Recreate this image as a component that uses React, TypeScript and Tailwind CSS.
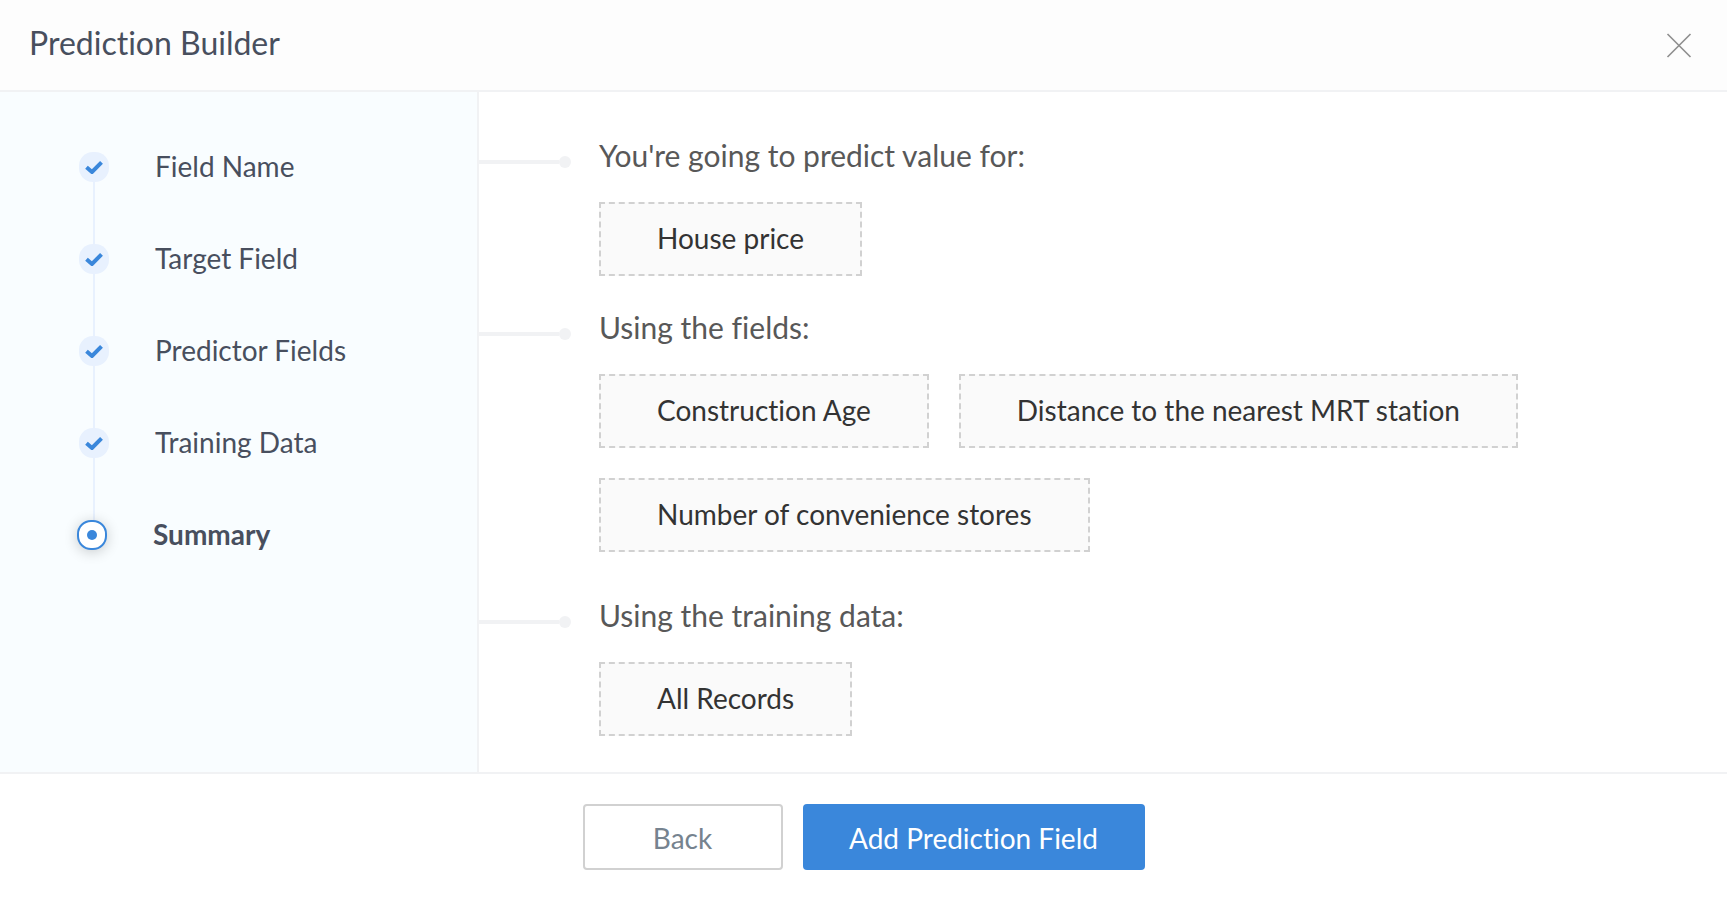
import { Fragment } from 'react'

// ── Data ──────────────────────────────────────────────────────

const steps = ['Field Name', 'Target Field', 'Predictor Fields', 'Training Data', 'Summary']
const currentStep = 4

const sections = [
  { title: "You're going to predict value for:", values: ['House price'], spacing: 'mb-[36px]' },
  {
    title: 'Using the fields:',
    values: ['Construction Age', 'Distance to the nearest MRT station', 'Number of convenience stores'],
    spacing: 'mb-[48px]',
  },
  { title: 'Using the training data:', values: ['All Records'], spacing: 'mb-[36px]' },
]

// ── Stepper ───────────────────────────────────────────────────

function DoneMark() {
  return (
    <span className="flex h-[30px] w-[30px] items-center justify-center rounded-[14px] bg-[#e8f1fe]">
      <svg width="18" height="14" viewBox="0 0 18 14" fill="none" aria-hidden="true">
        <path d="M1.5 7.2 L7 12 L16.5 2.4" stroke="#3a87db" strokeWidth="4" />
      </svg>
    </span>
  )
}

function CurrentMark() {
  return (
    <span className="-ml-0.5 flex h-[30px] w-[30px] items-center justify-center rounded-[14px] border-2 border-[#3a87db] bg-white shadow-[0_2px_14px_rgba(0,0,0,0.2)]">
      <span className="h-2.5 w-2.5 rounded-full bg-[#3a87db]" />
    </span>
  )
}

function Stepper() {
  return (
    <ol className="pl-[79px] pt-[60px]">
      {steps.map((step, i) => (
        <Fragment key={step}>
          <li
            aria-current={i === currentStep ? 'step' : undefined}
            className="flex h-[30px] items-center gap-[46px] text-[28px]"
          >
            {i === currentStep ? <CurrentMark /> : <DoneMark />}
            <span className={i === currentStep ? 'pb-0.5 font-bold' : 'pb-0.5'}>{step}</span>
          </li>
          {i < steps.length - 1 && (
            <li aria-hidden="true" className="ml-3.5 h-[62px] w-0.5 bg-[#e8f1fe]" />
          )}
        </Fragment>
      ))}
    </ol>
  )
}

// ── Page ──────────────────────────────────────────────────────

export default function App() {
  return (
    <div className="flex min-h-screen flex-col bg-white font-[Lato,sans-serif] text-[#484f5e] [font-variant-ligatures:none]">
      <header className="flex h-[92px] shrink-0 items-center justify-between border-b-2 border-[#f1f2f4] bg-[#fdfdfd] pl-[29px] pr-[31px]">
        <h1 className="pb-1 text-[32px]">Prediction Builder</h1>
        <button type="button" aria-label="Close" className="p-1">
          <svg width="26" height="26" viewBox="0 0 26 26" fill="none" aria-hidden="true">
            <path d="M1.5 2 L24.5 25 M24.5 2 L1.5 25" stroke="#8e8e8e" strokeWidth="1.6" />
          </svg>
        </button>
      </header>

      <div className="flex flex-1">
        <aside className="w-[479px] shrink-0 border-r-2 border-[#f1f2f4] bg-[#f9fdff]">
          <Stepper />
        </aside>

        <main className="min-w-0 flex-1 pt-[48px]">
          {sections.map(section => (
            <section key={section.title} className={section.spacing}>
              <div className="mb-[18px] flex h-11 items-center">
                <span className="h-1 w-20 bg-[#f1f2f4]" />
                <span className="h-3 w-3 rounded-full bg-[#f1f2f4]" />
                <h2 className="pb-3.5 pl-7 text-[30px] leading-9 text-[#585858]">{section.title}</h2>
              </div>
              <ul className="flex flex-wrap gap-[30px] pl-[120px] pr-[120px]">
                {section.values.map(value => (
                  <li
                    key={value}
                    className="flex h-[74px] items-center border-2 border-dashed border-[#d1d1d1] bg-[#fafafa] px-14 pb-0.5 text-[28px] text-[#333333]"
                  >
                    {value}
                  </li>
                ))}
              </ul>
            </section>
          ))}
        </main>
      </div>

      <footer className="flex h-[125px] shrink-0 justify-center gap-5 border-t-2 border-[#f1f2f4] pt-[30px]">
        <button
          type="button"
          className="h-[66px] w-[200px] rounded border-2 border-[#d1d1d1] bg-white pt-0.5 text-[28px] text-[#76838f]"
        >
          Back
        </button>
        <button type="button" className="h-[66px] w-[342px] rounded bg-[#3a87db] pt-0.5 text-[28px] text-white">
          Add Prediction Field
        </button>
      </footer>
    </div>
  )
}
